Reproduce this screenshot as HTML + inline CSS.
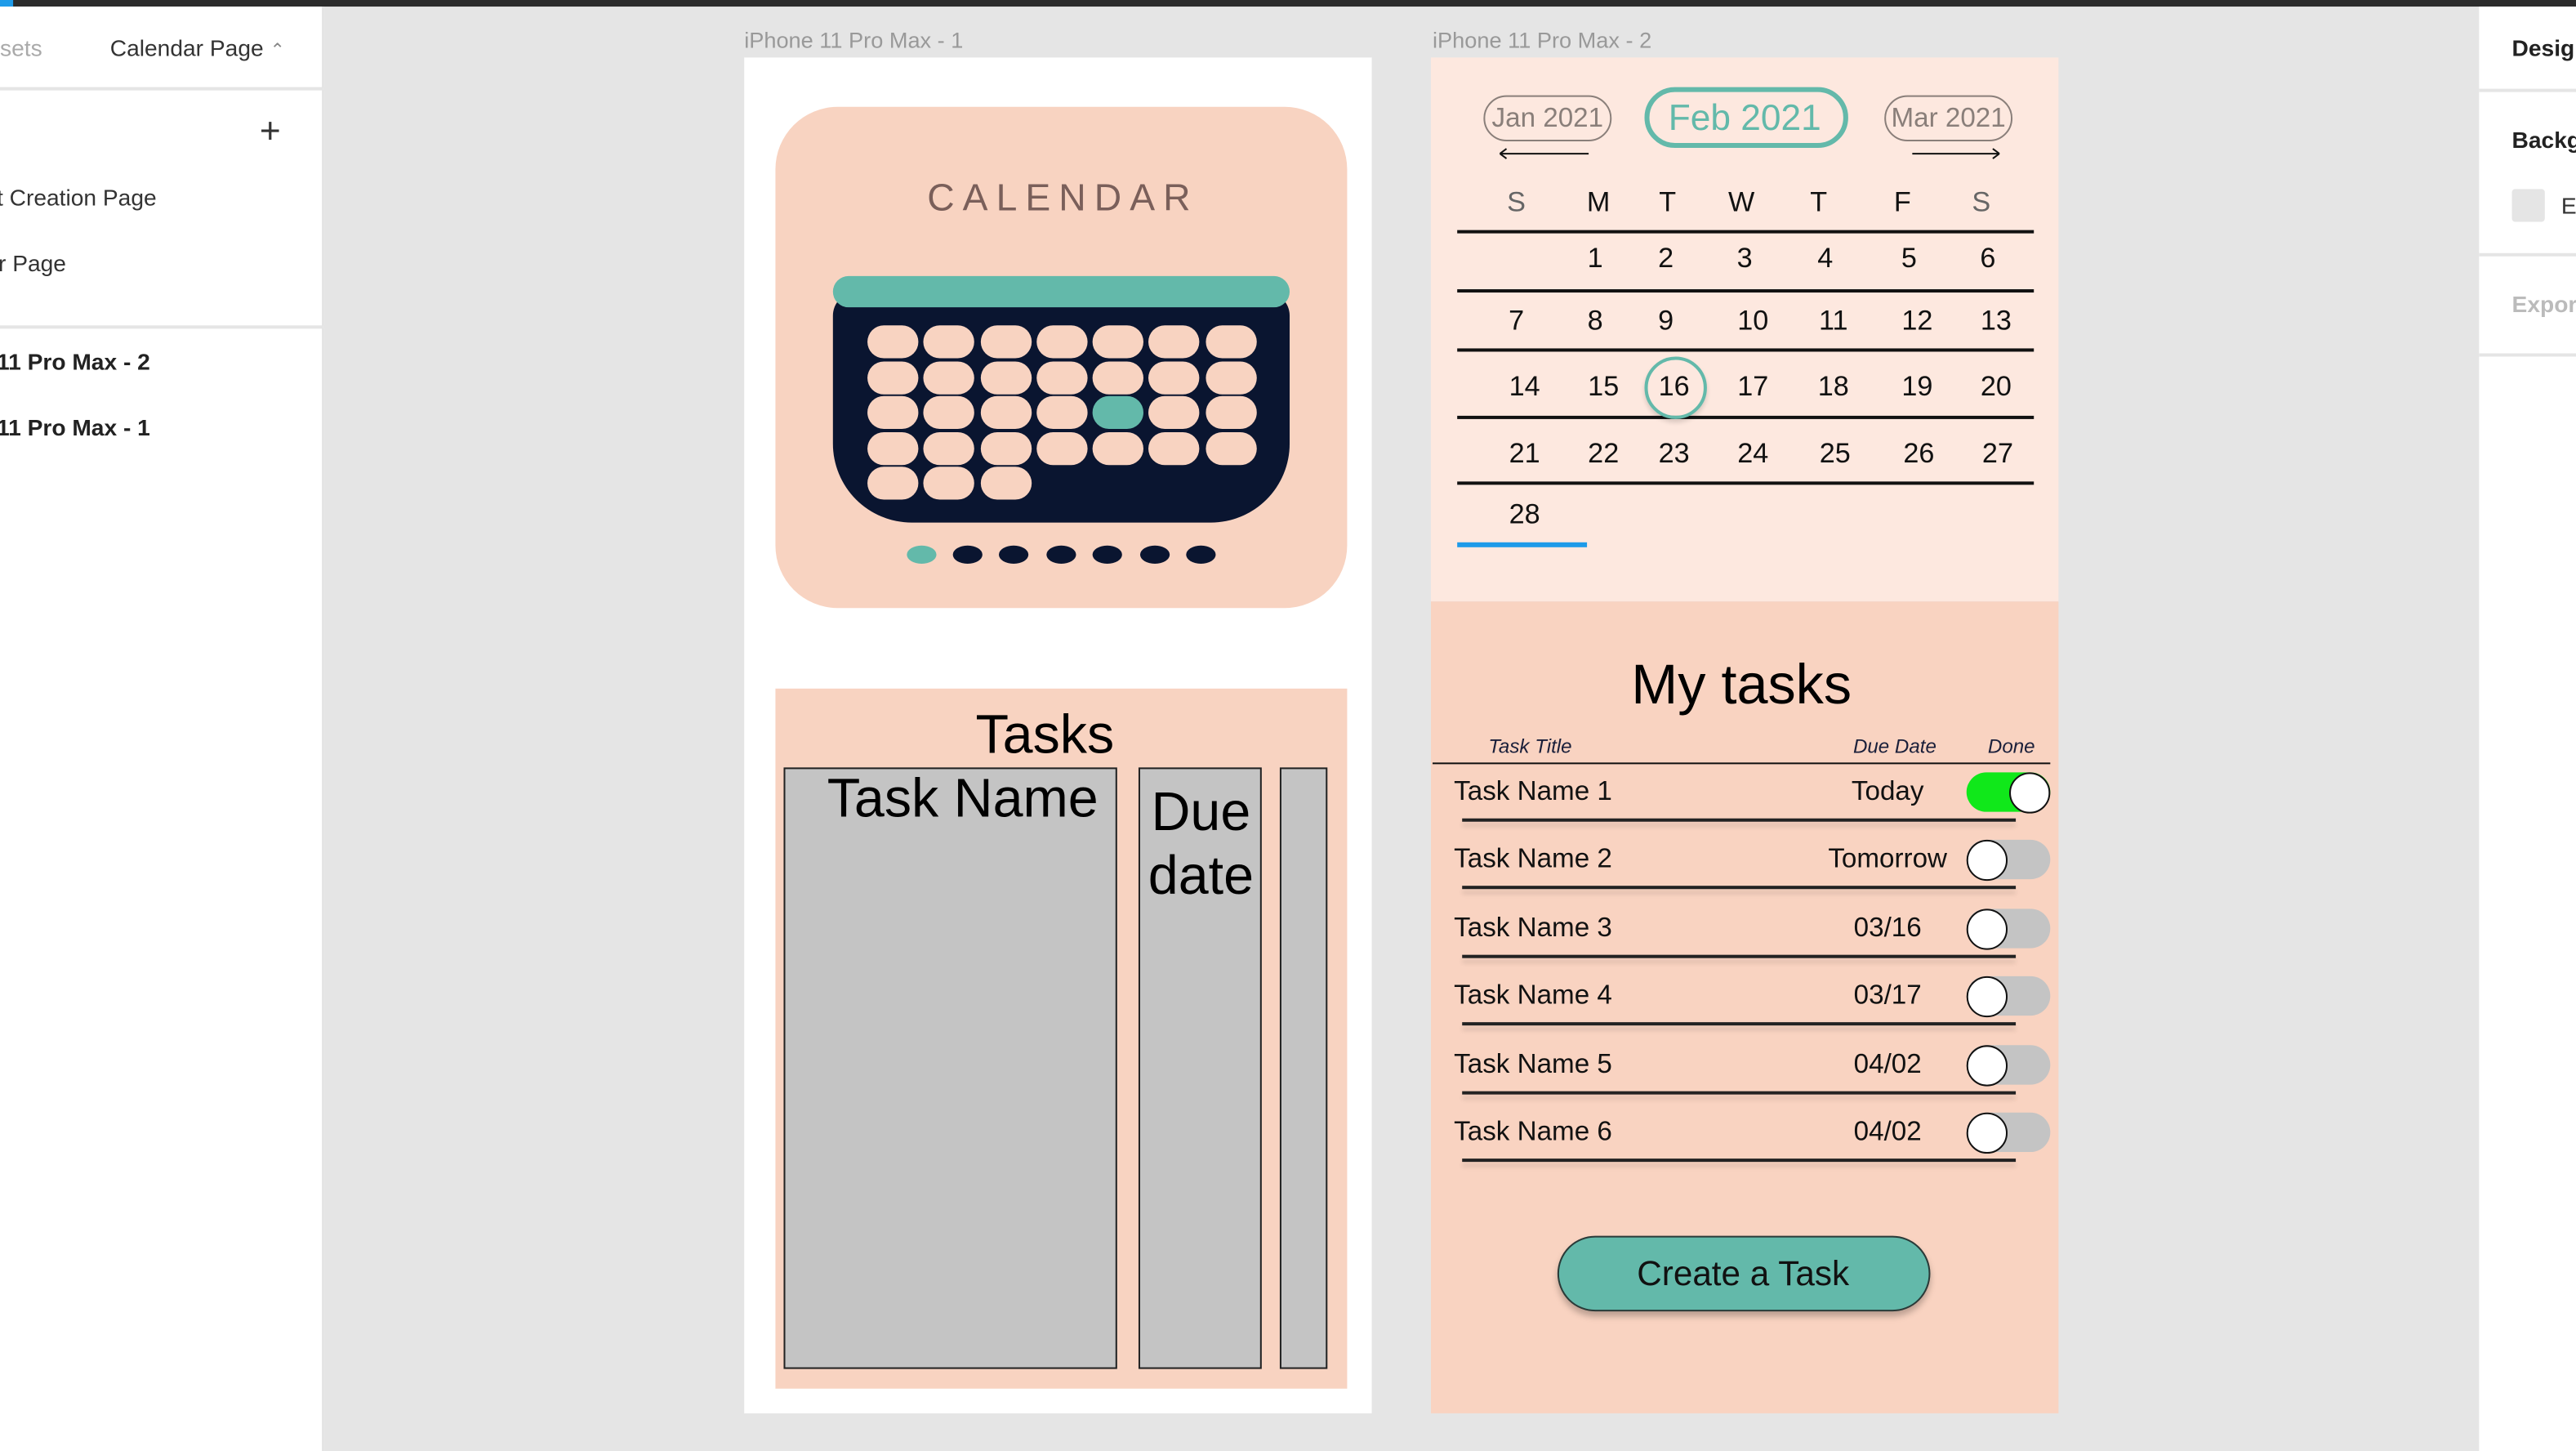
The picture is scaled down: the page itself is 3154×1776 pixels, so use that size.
<!DOCTYPE html>
<html><head><meta charset="utf-8">
<style>
*{margin:0;padding:0;box-sizing:border-box}
html,body{width:3154px;height:1775px;overflow:hidden;background:#e5e5e5}
#w{position:absolute;left:0;top:0;width:1568px;height:883px;transform:scale(2.01148);transform-origin:0 0;font-family:"Liberation Sans",sans-serif;background:#e5e5e5}
.a{position:absolute}
.t{position:absolute;white-space:nowrap;line-height:1}
.c{transform:translateX(-50%)}
.pill{position:absolute;width:31px;height:20px;border-radius:10px;background:#f8d3c1}
.ln{position:absolute;height:1.5px;background:#111}
.num{position:absolute;font-size:17px;line-height:1;transform:translate(-50%,-50%);color:#111}
.row{position:absolute;left:885px;font-size:16.5px;line-height:1;color:#111;transform:translateY(-50%)}
.dt{position:absolute;font-size:16.5px;line-height:1;color:#111;transform:translate(-50%,-50%)}
.ul{position:absolute;left:890px;width:337px;height:1.5px;background:#222;box-shadow:0 3px 3px rgba(0,0,0,.12)}
.tg{position:absolute;left:1197px;width:51px;height:24px;border-radius:12px;background:#c4c4c4}
.kn{position:absolute;top:0;width:25px;height:25px;border-radius:50%;background:#fff;border:1.3px solid #111;top:-0.5px}
.dot{position:absolute;top:332px;width:18px;height:11px;border-radius:50%;background:#0a1530}
.lp{font-size:14px;color:#333}
</style></head><body><div id="w">
<div class="a" style="left:0;top:0;width:1568px;height:4px;background:#2c2c2c"></div>
<div class="a" style="left:0;top:0;width:8px;height:4px;background:#1e9be9"></div>
<div class="a" style="left:0;top:4px;width:197px;height:879px;background:#fff;border-right:1px solid #e0e0e0"></div>
<div class="a" style="left:0;top:53px;width:197px;height:1.5px;background:#e5e5e5"></div>
<div class="a" style="left:0;top:198px;width:197px;height:1.5px;background:#e5e5e5"></div>
<div class="t lp" style="left:0;top:22px;color:#aaa">sets</div>
<div class="t lp" style="left:67px;top:22px">Calendar Page <span style="font-size:11px;color:#888">&#8963;</span></div>
<div class="t" style="left:158px;top:69px;font-size:22px;color:#333;font-weight:300">+</div>
<div class="t lp" style="left:-2px;top:113px">t Creation Page</div>
<div class="t lp" style="left:-1px;top:153px">r Page</div>
<div class="t lp" style="left:-2px;top:213px;color:#222;font-weight:600">11 Pro Max - 2</div>
<div class="t lp" style="left:-2px;top:253px;color:#222;font-weight:600">11 Pro Max - 1</div>
<div class="a" style="left:1509px;top:4px;width:59px;height:879px;background:#fff"></div>
<div class="a" style="left:1509px;top:54px;width:59px;height:1.5px;background:#e5e5e5"></div>
<div class="a" style="left:1509px;top:154px;width:59px;height:1.5px;background:#e5e5e5"></div>
<div class="a" style="left:1509px;top:215px;width:59px;height:1.5px;background:#e5e5e5"></div>
<div class="t" style="left:1529px;top:22px;font-size:14px;color:#222;font-weight:bold">Design</div>
<div class="t" style="left:1529px;top:78px;font-size:14px;color:#222;font-weight:bold">Background</div>
<div class="a" style="left:1529px;top:115px;width:20px;height:20px;border-radius:2px;background:#e5e5e5"></div>
<div class="t" style="left:1559px;top:118px;font-size:14px;color:#333">E</div>
<div class="t" style="left:1529px;top:178px;font-size:14px;color:#bbb;font-weight:bold">Export</div>

<div class="t" style="left:453px;top:18px;font-size:13.5px;color:#999">iPhone 11 Pro Max - 1</div>
<div class="t" style="left:872px;top:18px;font-size:13.5px;color:#999">iPhone 11 Pro Max - 2</div>

<div class="a" style="left:453px;top:35px;width:382px;height:825px;background:#fff"></div>
<div class="a" style="left:472px;top:65px;width:348px;height:305px;border-radius:38px;background:#f8d3c1"></div>
<div class="t c" style="left:647px;top:109px;font-size:23px;color:#7a5f5a;letter-spacing:5px">CALENDAR</div>
<div class="a" style="left:507px;top:178px;width:278px;height:140px;border-radius:14px 14px 48px 48px;background:#0a1530"></div>
<div class="a" style="left:507px;top:168px;width:278px;height:19px;border-radius:10px;background:#63b9aa"></div>
<div class="pill" style="left:528px;top:198px"></div><div class="pill" style="left:562px;top:198px"></div><div class="pill" style="left:597px;top:198px"></div><div class="pill" style="left:631px;top:198px"></div><div class="pill" style="left:665px;top:198px"></div><div class="pill" style="left:699px;top:198px"></div><div class="pill" style="left:734px;top:198px"></div>
<div class="pill" style="left:528px;top:220px"></div><div class="pill" style="left:562px;top:220px"></div><div class="pill" style="left:597px;top:220px"></div><div class="pill" style="left:631px;top:220px"></div><div class="pill" style="left:665px;top:220px"></div><div class="pill" style="left:699px;top:220px"></div><div class="pill" style="left:734px;top:220px"></div>
<div class="pill" style="left:528px;top:241px"></div><div class="pill" style="left:562px;top:241px"></div><div class="pill" style="left:597px;top:241px"></div><div class="pill" style="left:631px;top:241px"></div><div class="pill" style="left:665px;top:241px;background:#63b9aa"></div><div class="pill" style="left:699px;top:241px"></div><div class="pill" style="left:734px;top:241px"></div>
<div class="pill" style="left:528px;top:263px"></div><div class="pill" style="left:562px;top:263px"></div><div class="pill" style="left:597px;top:263px"></div><div class="pill" style="left:631px;top:263px"></div><div class="pill" style="left:665px;top:263px"></div><div class="pill" style="left:699px;top:263px"></div><div class="pill" style="left:734px;top:263px"></div>
<div class="pill" style="left:528px;top:284px"></div><div class="pill" style="left:562px;top:284px"></div><div class="pill" style="left:597px;top:284px"></div>
<div class="dot" style="left:552px;background:#63b9aa"></div><div class="dot" style="left:580px"></div><div class="dot" style="left:608px"></div><div class="dot" style="left:637px"></div><div class="dot" style="left:665px"></div><div class="dot" style="left:694px"></div><div class="dot" style="left:722px"></div>

<div class="a" style="left:472px;top:419px;width:348px;height:426px;background:#f8d3c1"></div>
<div class="t c" style="left:636px;top:430px;font-size:33px;color:#000">Tasks</div>
<div class="a" style="left:477px;top:467px;width:203px;height:366px;background:#c4c4c4;border:1px solid #222"></div>
<div class="a" style="left:693px;top:467px;width:75px;height:366px;background:#c4c4c4;border:1px solid #222"></div>
<div class="a" style="left:779px;top:467px;width:29px;height:366px;background:#c4c4c4;border:1px solid #222"></div>
<div class="t c" style="left:586px;top:469px;font-size:33px;color:#000">Task Name</div>
<div class="t c" style="left:731px;top:474px;font-size:33px;color:#000;line-height:39px;text-align:center">Due<br>date</div>

<div class="a" style="left:871px;top:35px;width:382px;height:331px;background:#fde8df"></div>
<div class="a" style="left:871px;top:366px;width:382px;height:494px;background:#f9d3c1"></div>
<div class="a" style="left:903px;top:58px;width:78px;height:28px;border-radius:14px;border:1px solid #8a7f7a"></div>
<div class="t c" style="left:942px;top:64px;font-size:16.5px;color:#8a7f7a">Jan 2021</div>
<div class="a" style="left:1001px;top:53px;width:124px;height:37px;border-radius:19px;border:3px solid #63b9aa"></div>
<div class="t c" style="left:1062px;top:61px;font-size:22px;color:#63b9aa">Feb 2021</div>
<div class="a" style="left:1147px;top:58px;width:78px;height:28px;border-radius:14px;border:1px solid #8a7f7a"></div>
<div class="t c" style="left:1186px;top:64px;font-size:16.5px;color:#8a7f7a">Mar 2021</div>
<svg class="a" style="left:905px;top:88px" width="330" height="12" viewBox="905 88 330 12"><path d="M913 93.5H967M913 93.5l4-3M913 93.5l4 3M1164 93.5H1217M1217 93.5l-4-3M1217 93.5l-4 3" stroke="#111" stroke-width="1" fill="none"/></svg>

<div class="num" style="left:923px;top:123px;color:#666">S</div><div class="num" style="left:973px;top:123px">M</div><div class="num" style="left:1015px;top:123px">T</div><div class="num" style="left:1060px;top:123px">W</div><div class="num" style="left:1107px;top:123px">T</div><div class="num" style="left:1158px;top:123px">F</div><div class="num" style="left:1206px;top:123px;color:#666">S</div>
<div class="ln" style="left:887px;top:140px;width:351px"></div>
<div class="ln" style="left:887px;top:176px;width:351px"></div>
<div class="ln" style="left:887px;top:212px;width:351px"></div>
<div class="ln" style="left:887px;top:253px;width:351px"></div>
<div class="ln" style="left:887px;top:293px;width:351px"></div>
<div class="num" style="left:971px;top:157px">1</div><div class="num" style="left:1014px;top:157px">2</div><div class="num" style="left:1062px;top:157px">3</div><div class="num" style="left:1111px;top:157px">4</div><div class="num" style="left:1162px;top:157px">5</div><div class="num" style="left:1210px;top:157px">6</div>
<div class="num" style="left:923px;top:195px">7</div><div class="num" style="left:971px;top:195px">8</div><div class="num" style="left:1014px;top:195px">9</div><div class="num" style="left:1067px;top:195px">10</div><div class="num" style="left:1116px;top:195px">11</div><div class="num" style="left:1167px;top:195px">12</div><div class="num" style="left:1215px;top:195px">13</div>
<div class="num" style="left:928px;top:235px">14</div><div class="num" style="left:976px;top:235px">15</div><div class="num" style="left:1019px;top:235px">16</div><div class="num" style="left:1067px;top:235px">17</div><div class="num" style="left:1116px;top:235px">18</div><div class="num" style="left:1167px;top:235px">19</div><div class="num" style="left:1215px;top:235px">20</div>
<div class="num" style="left:928px;top:276px">21</div><div class="num" style="left:976px;top:276px">22</div><div class="num" style="left:1019px;top:276px">23</div><div class="num" style="left:1067px;top:276px">24</div><div class="num" style="left:1117px;top:276px">25</div><div class="num" style="left:1168px;top:276px">26</div><div class="num" style="left:1216px;top:276px">27</div>
<div class="num" style="left:928px;top:313px">28</div>
<div class="a" style="left:1001px;top:217px;width:38px;height:38px;border-radius:50%;border:2.5px solid #63b9aa;box-shadow:0 2px 3px rgba(0,0,0,.15)"></div>
<div class="a" style="left:887px;top:329.5px;width:79px;height:3px;background:#1e9be9"></div>

<div class="t c" style="left:1060px;top:400px;font-size:34px;color:#000">My tasks</div>
<div class="t" style="left:906px;top:448px;font-size:12px;font-style:italic;color:#1a1f3a">Task Title</div>
<div class="t" style="left:1128px;top:448px;font-size:12px;font-style:italic;color:#1a1f3a">Due Date</div>
<div class="t" style="left:1210px;top:448px;font-size:12px;font-style:italic;color:#1a1f3a">Done</div>
<div class="ln" style="left:872px;top:463.5px;width:376px"></div>

<div class="row" style="top:482px">Task Name 1</div><div class="dt" style="left:1149px;top:482px">Today</div>
<div class="ul" style="top:498px"></div>
<div class="tg" style="top:470px;background:#10e81a"><div class="kn" style="left:26px"></div></div>
<div class="row" style="top:523px">Task Name 2</div><div class="dt" style="left:1149px;top:523px">Tomorrow</div>
<div class="ul" style="top:539px"></div>
<div class="tg" style="top:511px"><div class="kn" style="left:0"></div></div>
<div class="row" style="top:565px">Task Name 3</div><div class="dt" style="left:1149px;top:565px">03/16</div>
<div class="ul" style="top:581px"></div>
<div class="tg" style="top:553px"><div class="kn" style="left:0"></div></div>
<div class="row" style="top:606px">Task Name 4</div><div class="dt" style="left:1149px;top:606px">03/17</div>
<div class="ul" style="top:622px"></div>
<div class="tg" style="top:594px"><div class="kn" style="left:0"></div></div>
<div class="row" style="top:648px">Task Name 5</div><div class="dt" style="left:1149px;top:648px">04/02</div>
<div class="ul" style="top:664px"></div>
<div class="tg" style="top:636px"><div class="kn" style="left:0"></div></div>
<div class="row" style="top:689px">Task Name 6</div><div class="dt" style="left:1149px;top:689px">04/02</div>
<div class="ul" style="top:705px"></div>
<div class="tg" style="top:677px"><div class="kn" style="left:0"></div></div>

<div class="a" style="left:948px;top:752px;width:227px;height:46px;border-radius:23px;background:#63b9aa;border:1px solid #2a3a38;box-shadow:0 3px 4px rgba(0,0,0,.25)"></div>
<div class="t c" style="left:1061px;top:765px;font-size:21px;color:#111">Create a Task</div>
</div></body></html>
